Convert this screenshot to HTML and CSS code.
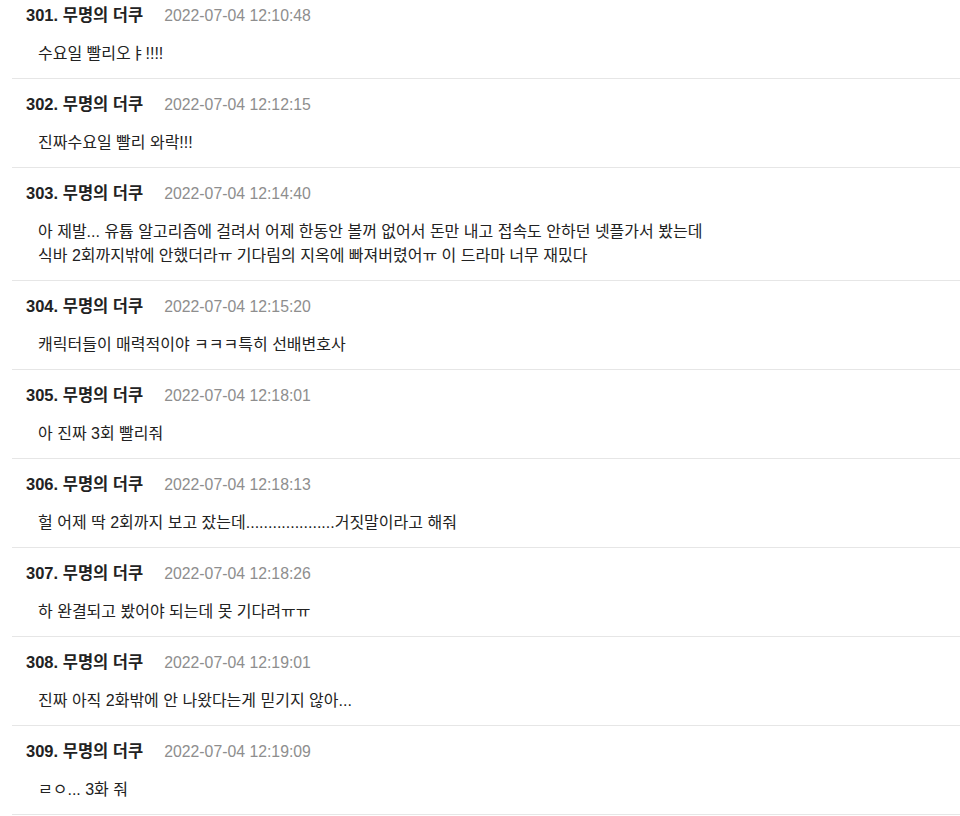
FILE: index.html
```html
<!DOCTYPE html>
<html lang="ko">
<head>
  <meta charset="UTF-8" />
  <meta name="viewport" content="width=device-width, initial-scale=1.0" />
  <title>댓글</title>
  <link rel="stylesheet" href="styles.css">
</head>
<body>
  <ul class="comments">
    <li class="comment">
      <div class="meta"><span class="author">301. 무명의 더쿠</span><span class="date">2022-07-04 12:10:48</span></div>
      <p class="text">수요일 빨리오ㅑ!!!!</p>
    </li>
    <li class="comment">
      <div class="meta"><span class="author">302. 무명의 더쿠</span><span class="date">2022-07-04 12:12:15</span></div>
      <p class="text">진짜수요일 빨리 와락!!!</p>
    </li>
    <li class="comment">
      <div class="meta"><span class="author">303. 무명의 더쿠</span><span class="date">2022-07-04 12:14:40</span></div>
      <p class="text">아 제발... 유튭 알고리즘에 걸려서 어제 한동안 볼꺼 없어서 돈만 내고 접속도 안하던 넷플가서 봤는데<br>식바 2회까지밖에 안했더라ㅠ 기다림의 지옥에 빠져버렸어ㅠ 이 드라마 너무 재밌다</p>
    </li>
    <li class="comment">
      <div class="meta"><span class="author">304. 무명의 더쿠</span><span class="date">2022-07-04 12:15:20</span></div>
      <p class="text">캐릭터들이 매력적이야 ㅋㅋㅋ특히 선배변호사</p>
    </li>
    <li class="comment">
      <div class="meta"><span class="author">305. 무명의 더쿠</span><span class="date">2022-07-04 12:18:01</span></div>
      <p class="text">아 진짜 3회 빨리줘</p>
    </li>
    <li class="comment">
      <div class="meta"><span class="author">306. 무명의 더쿠</span><span class="date">2022-07-04 12:18:13</span></div>
      <p class="text">헐 어제 딱 2회까지 보고 잤는데....................거짓말이라고 해줘</p>
    </li>
    <li class="comment">
      <div class="meta"><span class="author">307. 무명의 더쿠</span><span class="date">2022-07-04 12:18:26</span></div>
      <p class="text">하 완결되고 봤어야 되는데 못 기다려ㅠㅠ</p>
    </li>
    <li class="comment">
      <div class="meta"><span class="author">308. 무명의 더쿠</span><span class="date">2022-07-04 12:19:01</span></div>
      <p class="text">진짜 아직 2화밖에 안 나왔다는게 믿기지 않아...</p>
    </li>
    <li class="comment">
      <div class="meta"><span class="author">309. 무명의 더쿠</span><span class="date">2022-07-04 12:19:09</span></div>
      <p class="text">ㄹㅇ... 3화 줘</p>
    </li>
  </ul>
</body>
</html>
```

FILE: styles.css
```css
body {
    margin: 0;
    background-color: #fff;
    color: #222;
    font-family: "Liberation Sans", "Noto Sans CJK KR", sans-serif;
    font-size: 16px;
}

.comments {
    list-style: none;
    margin: -10px 0 0 12px;
    padding: 0;
}

.comment {
    border-bottom: 1px solid #e6e6e6;
    padding: 13px 0 12px 14px;
}

.meta {
    display: flex;
    align-items: baseline;
    gap: 21px;
    line-height: 24px;
}

.author {
    font-size: 16.5px;
    font-weight: bold;
    color: #222;
}

.date {
    font-size: 15.8px;
    color: #8e8e8e;
}

.text {
    margin: 14px 0 0 12px;
    line-height: 24px;
}
```
